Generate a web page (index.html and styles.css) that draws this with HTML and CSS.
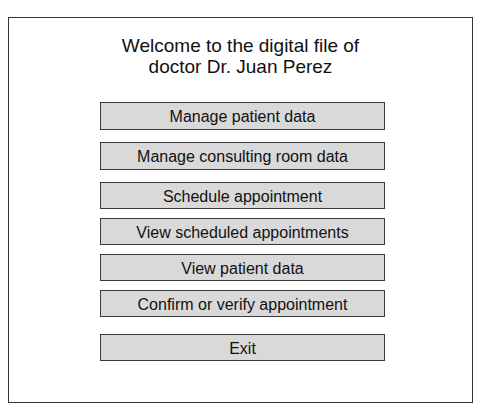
FILE: index.html
```html
<!DOCTYPE html>
<html>
<head>
<meta charset="utf-8">
<link rel="stylesheet" href="styles.css">
</head>
<body>
<div class="frame">
  <h1 class="title">Welcome to the digital file of<br>doctor Dr. Juan Perez</h1>
  <div class="menu">
    <div class="btn tall">Manage patient data</div>
    <div class="btn tall">Manage consulting room data</div>
    <div class="btn">Schedule appointment</div>
    <div class="btn">View scheduled appointments</div>
    <div class="btn">View patient data</div>
    <div class="btn">Confirm or verify appointment</div>
    <div class="btn exit">Exit</div>
  </div>
</div>
</body>
</html>
```

FILE: styles.css
```css
html, body {
  margin: 0;
  padding: 0;
  background: #ffffff;
}
body {
  padding: 17px 8px 0 8px;
  font-family: "Liberation Sans", Arial, sans-serif;
  color: #111111;
}
.frame {
  box-sizing: border-box;
  width: 465px;
  height: 386px;
  border: 1px solid #333333;
  padding-top: 17px;
}
.title {
  margin: 0;
  font-size: 19px;
  line-height: 21px;
  font-weight: normal;
  text-align: center;
  color: #111111;
}
.menu {
  display: flex;
  flex-direction: column;
  align-items: flex-start;
  gap: 9px;
  margin-top: 25px;
  padding-left: 91px;
}
.btn {
  box-sizing: border-box;
  width: 285px;
  height: 27px;
  border: 1px solid #3a3a3a;
  background: #d9d9d9;
  font-size: 16px;
  line-height: 25px;
  padding-top: 1px;
  text-align: center;
  color: #111111;
}
.btn.tall {
  height: 28px;
  line-height: 25px;
  margin-bottom: 3px;
}
.btn.exit {
  margin-top: 8px;
}
```
